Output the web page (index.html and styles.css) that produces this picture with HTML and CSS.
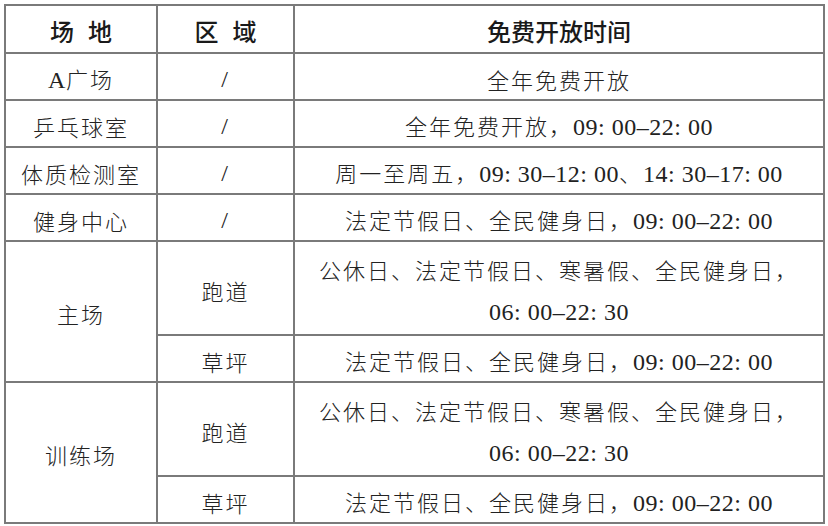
FILE: index.html
```html
<!DOCTYPE html>
<html lang="zh-CN">
<head>
<meta charset="utf-8">
<title>免费开放时间</title>
<link rel="stylesheet" href="styles.css">
</head>
<body>
<table class="schedule">
  <colgroup>
    <col class="c-venue">
    <col class="c-area">
    <col class="c-time">
  </colgroup>
  <thead>
    <tr class="head">
      <th class="spaced">场地</th>
      <th class="spaced">区域</th>
      <th>免费开放时间</th>
    </tr>
  </thead>
  <tbody>
    <tr class="one">
      <td><span class="num">A</span>广场</td>
      <td class="slash">/</td>
      <td>全年免费开放</td>
    </tr>
    <tr class="one">
      <td>乒乓球室</td>
      <td class="slash">/</td>
      <td>全年免费开放，<span class="num">09: 00–22: 00</span></td>
    </tr>
    <tr class="one">
      <td>体质检测室</td>
      <td class="slash">/</td>
      <td>周一至周五，<span class="num">09: 30–12: 00</span>、<span class="num">14: 30–17: 00</span></td>
    </tr>
    <tr class="one">
      <td>健身中心</td>
      <td class="slash">/</td>
      <td>法定节假日、全民健身日，<span class="num">09: 00–22: 00</span></td>
    </tr>
    <tr class="two">
      <td rowspan="2" class="merged">主场</td>
      <td>跑道</td>
      <td class="lines">公休日、法定节假日、寒暑假、全民健身日，<br><span class="num">06: 00–22: 30</span></td>
    </tr>
    <tr class="one">
      <td>草坪</td>
      <td>法定节假日、全民健身日，<span class="num">09: 00–22: 00</span></td>
    </tr>
    <tr class="two">
      <td rowspan="2" class="merged">训练场</td>
      <td>跑道</td>
      <td class="lines">公休日、法定节假日、寒暑假、全民健身日，<br><span class="num">06: 00–22: 30</span></td>
    </tr>
    <tr class="one">
      <td>草坪</td>
      <td>法定节假日、全民健身日，<span class="num">09: 00–22: 00</span></td>
    </tr>
  </tbody>
</table>
</body>
</html>
```

FILE: styles.css
```css
html, body {
  margin: 0;
  padding: 0;
  background: #ffffff;
}

body {
  padding: 4px 0 0 4px;
  font-family: "Noto Sans CJK SC", "Noto Sans", sans-serif;
  color: #222222;
}

.schedule {
  border-collapse: collapse;
  table-layout: fixed;
  width: 819px;
}

.c-venue { width: 152px; }
.c-area { width: 137px; }
.c-time { width: 530px; }

.schedule th,
.schedule td {
  border: 2px solid #7a7a7a;
  padding: 0;
  text-align: center;
  vertical-align: middle;
  white-space: nowrap;
}

.schedule th {
  font-size: 24px;
  font-weight: 500;
  color: #1a1a1a;
  line-height: 30px;
  padding-top: 3px;
}

.schedule th.spaced {
  letter-spacing: 14px;
  text-indent: 14px;
}

.schedule td {
  font-size: 22px;
  font-weight: 300;
  letter-spacing: 2px;
  line-height: 30px;
  padding-top: 4px;
}

.head { height: 48px; }
.one { height: 47px; }
.two { height: 94px; }

.schedule td.lines {
  line-height: 41px;
  padding-top: 6px;
}

.schedule td.merged {
  padding-top: 2px;
}

.num {
  font-family: "Liberation Serif", "Times New Roman", serif;
  font-size: 24px;
  font-weight: 400;
  letter-spacing: 0.5px;
}

.schedule td.slash {
  font-family: "Liberation Serif", serif;
  font-size: 24px;
}
```
